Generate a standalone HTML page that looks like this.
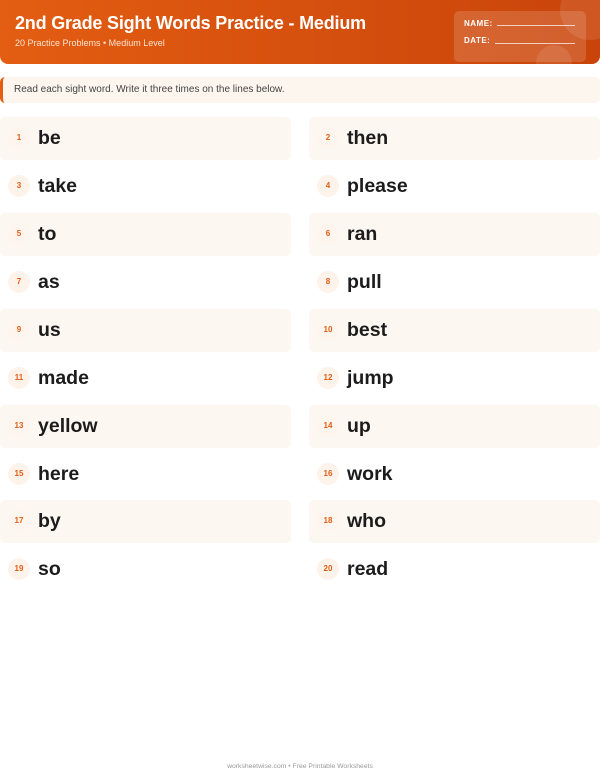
<!DOCTYPE html>
<html><head><meta charset="utf-8"><style>
*{margin:0;padding:0;box-sizing:border-box}
body{width:600px;height:776px;background:#fff;font-family:"Liberation Sans",sans-serif;position:relative;overflow:hidden}
.hdr{position:absolute;left:0;top:0;width:600px;height:64px;border-radius:0 0 8px 8px;background:linear-gradient(90deg,#e35d12,#c9440a);overflow:hidden}
.hdr h1{position:absolute;left:15px;top:13px;color:#fff;font-size:18px;font-weight:bold;letter-spacing:-0.2px}
.hdr .sub{position:absolute;left:15px;top:38px;color:#fde3d0;font-size:9px}
.c1{position:absolute;right:-20px;top:-20px;width:60px;height:60px;border-radius:50%;background:rgba(255,255,255,0.1)}
.c2{position:absolute;left:536px;top:45px;width:36px;height:36px;border-radius:50%;background:rgba(255,255,255,0.1)}
.box{position:absolute;left:454px;top:11px;width:132px;height:51px;border-radius:5px;background:rgba(255,255,255,0.15)}
.f{position:absolute;left:464px;color:#fff;font-size:8px;font-weight:bold;letter-spacing:0.5px}
.ln{position:absolute;border-bottom:1px solid rgba(255,255,255,0.7);height:1px}
.ins{position:absolute;left:0;top:77px;width:600px;height:26px;background:#fdf6ef;border-left:3px solid #e35d12;border-radius:5px;font-size:10px;color:#444;padding:7px 0 0 11px}
.r{position:absolute;height:43px;width:291px;border-radius:5px}
.r.s{background:#fdf7f2}
.n{position:absolute;left:8px;top:10px;width:22px;height:22px;border-radius:50%;background:#fdf3ea;color:#e35d12;font-size:8px;font-weight:bold;text-align:center;line-height:22px}
.r.s .n{background:#fdf5ee}
.w{position:absolute;left:38px;top:10px;font-size:19.5px;font-weight:bold;color:#1c1c1c}
.ft{position:absolute;top:763px;left:0;width:600px;text-align:center;font-size:6.8px;color:#999}
</style></head><body>
<div class="hdr"><h1>2nd Grade Sight Words Practice - Medium</h1><div class="sub">20 Practice Problems • Medium Level</div>
<div class="c1"></div><div class="c2"></div><div class="box"></div>
<div class="f" style="top:19px">NAME:</div><div class="ln" style="left:497px;top:25px;width:78px"></div>
<div class="f" style="top:36px">DATE:</div><div class="ln" style="left:495px;top:43px;width:80px"></div>
</div>
<div class="ins">Read each sight word. Write it three times on the lines below.</div>
<div class="r s" style="left:0;top:117px"><div class="n">1</div><div class="w">be</div></div>
<div class="r s" style="left:309px;top:117px"><div class="n">2</div><div class="w">then</div></div>
<div class="r" style="left:0;top:165px"><div class="n">3</div><div class="w">take</div></div>
<div class="r" style="left:309px;top:165px"><div class="n">4</div><div class="w">please</div></div>
<div class="r s" style="left:0;top:213px"><div class="n">5</div><div class="w">to</div></div>
<div class="r s" style="left:309px;top:213px"><div class="n">6</div><div class="w">ran</div></div>
<div class="r" style="left:0;top:261px"><div class="n">7</div><div class="w">as</div></div>
<div class="r" style="left:309px;top:261px"><div class="n">8</div><div class="w">pull</div></div>
<div class="r s" style="left:0;top:309px"><div class="n">9</div><div class="w">us</div></div>
<div class="r s" style="left:309px;top:309px"><div class="n">10</div><div class="w">best</div></div>
<div class="r" style="left:0;top:357px"><div class="n">11</div><div class="w">made</div></div>
<div class="r" style="left:309px;top:357px"><div class="n">12</div><div class="w">jump</div></div>
<div class="r s" style="left:0;top:405px"><div class="n">13</div><div class="w">yellow</div></div>
<div class="r s" style="left:309px;top:405px"><div class="n">14</div><div class="w">up</div></div>
<div class="r" style="left:0;top:453px"><div class="n">15</div><div class="w">here</div></div>
<div class="r" style="left:309px;top:453px"><div class="n">16</div><div class="w">work</div></div>
<div class="r s" style="left:0;top:500px"><div class="n">17</div><div class="w">by</div></div>
<div class="r s" style="left:309px;top:500px"><div class="n">18</div><div class="w">who</div></div>
<div class="r" style="left:0;top:548px"><div class="n">19</div><div class="w">so</div></div>
<div class="r" style="left:309px;top:548px"><div class="n">20</div><div class="w">read</div></div>
<div class="ft">worksheetwise.com • Free Printable Worksheets</div>
</body></html>
